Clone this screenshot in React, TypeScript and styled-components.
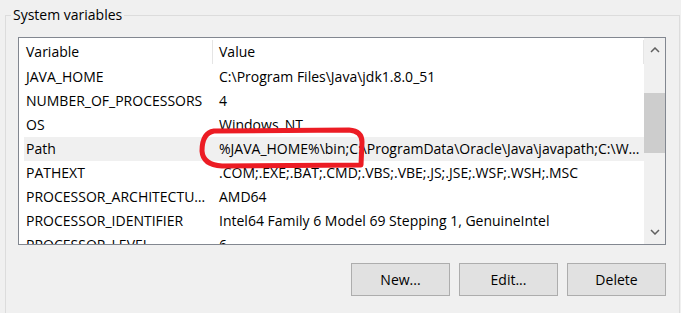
import React from "react";
import styled, { createGlobalStyle } from "styled-components";

const GlobalStyle = createGlobalStyle`
  html, body {
    margin: 0;
    padding: 0;
    background: #f0f0f0;
  }

  body {
    font-family: "Open Sans", "Noto Sans", sans-serif;
    font-size: 14px;
    color: #000;
  }
`;

const Page = styled.div`
  position: relative;
  width: 681px;
  height: 313px;
  overflow: hidden;
`;

const GroupBox = styled.fieldset`
  box-sizing: border-box;
  width: 675px;
  min-width: 0;
  min-height: 340px;
  margin: 5px 0 0 5px;
  padding: 0;
  border: 1px solid #dcdcdc;
`;

const Legend = styled.legend`
  margin-left: 5px;
  padding: 0 2px;
  line-height: 20px;
`;

const GroupBody = styled.div`
  padding: 12px 13px 0 12px;
`;

const ListView = styled.div`
  box-sizing: border-box;
  display: flex;
  width: 648px;
  height: 208px;
  border: 1px solid #828790;
  background: #fff;
  overflow: hidden;
`;

const Viewport = styled.div`
  flex: 1;
  padding-left: 5px;
  overflow: hidden;
`;

const Header = styled.div`
  display: grid;
  grid-template-columns: 189px 1fr;
  height: 27px;
`;

interface CellProps {
  $first?: boolean;
}

const HeaderCell = styled.div<CellProps>`
  box-sizing: border-box;
  height: 24px;
  margin-top: 2px;
  padding-left: ${(p) => (p.$first ? "2px" : "6px")};
  border-right: 1px solid #e5e5e5;
  line-height: 24px;
  white-space: nowrap;
`;

interface RowProps {
  $selected?: boolean;
}

const Row = styled.div<RowProps>`
  display: grid;
  grid-template-columns: 189px 1fr;
  height: 24px;
  line-height: 24px;
  background: ${(p) => (p.$selected ? "#f0f0f0" : "transparent")};
`;

const Cell = styled.div<CellProps>`
  min-width: 0;
  padding-left: ${(p) => (p.$first ? "2px" : "6px")};
  padding-right: 4px;
  white-space: nowrap;
  overflow: hidden;
  text-overflow: ellipsis;
`;

const ScrollBar = styled.div`
  display: flex;
  flex-direction: column;
  width: 21px;
  background: #f0f0f0;
`;

const ArrowButton = styled.div`
  display: flex;
  align-items: center;
  justify-content: center;
  height: 24px;
`;

const Track = styled.div`
  flex: 1;
`;

const Thumb = styled.div`
  margin-top: 31px;
  height: 60px;
  background: #cdcdcd;
`;

const ButtonRow = styled.div`
  display: flex;
  justify-content: flex-end;
  gap: 9px;
  width: 648px;
  margin-top: 18px;
`;

const Button = styled.button`
  box-sizing: border-box;
  width: 99px;
  height: 33px;
  padding: 0;
  border: 1px solid #adadad;
  background: #e1e1e1;
  color: #000;
  font-family: inherit;
  font-size: 14px;
`;

const Marker = styled.svg`
  position: absolute;
  top: 0;
  left: 0;
  pointer-events: none;
`;

const variables = [
  { name: "JAVA_HOME", value: "C:\\Program Files\\Java\\jdk1.8.0_51" },
  { name: "NUMBER_OF_PROCESSORS", value: "4" },
  { name: "OS", value: "Windows_NT" },
  {
    name: "Path",
    value:
      "%JAVA_HOME%\\bin;C:\\ProgramData\\Oracle\\Java\\javapath;C:\\Windows\\system32;C:\\Windows",
    selected: true,
  },
  { name: "PATHEXT", value: ".COM;.EXE;.BAT;.CMD;.VBS;.VBE;.JS;.JSE;.WSF;.WSH;.MSC" },
  { name: "PROCESSOR_ARCHITECTURE", value: "AMD64" },
  { name: "PROCESSOR_IDENTIFIER", value: "Intel64 Family 6 Model 69 Stepping 1, GenuineIntel" },
  { name: "PROCESSOR_LEVEL", value: "6" },
];

const Chevron = ({ down }: { down?: boolean }): JSX.Element => (
  <svg width="10" height="6" viewBox="0 0 10 6">
    <polyline
      points={down ? "1,1 5,5 9,1" : "1,5 5,1 9,5"}
      fill="none"
      stroke="#606060"
      strokeWidth="1.5"
    />
  </svg>
);

const App = (): JSX.Element => {
  return (
    <Page>
      <GlobalStyle />
      <GroupBox>
        <Legend>System variables</Legend>
        <GroupBody>
          <ListView>
            <Viewport>
              <Header>
                <HeaderCell $first>Variable</HeaderCell>
                <HeaderCell>Value</HeaderCell>
              </Header>
              {variables.map((v) => (
                <Row key={v.name} $selected={v.selected}>
                  <Cell $first>{v.name}</Cell>
                  <Cell>{v.value}</Cell>
                </Row>
              ))}
            </Viewport>
            <ScrollBar>
              <ArrowButton>
                <Chevron />
              </ArrowButton>
              <Track>
                <Thumb />
              </Track>
              <ArrowButton>
                <Chevron down />
              </ArrowButton>
            </ScrollBar>
          </ListView>
          <ButtonRow>
            <Button>New...</Button>
            <Button>Edit...</Button>
            <Button>Delete</Button>
          </ButtonRow>
        </GroupBody>
      </GroupBox>
      {/* hand-drawn highlight around the first Path entry */}
      <Marker width="681" height="313" viewBox="0 0 681 313">
        <path
          d="M 214 131 L 349 130 Q 362 131 362 142 L 361 165 L 222 166 Q 203 165 202 151 Q 202 133 214 131 Z"
          fill="none"
          stroke="#ec1c24"
          strokeWidth="5"
          strokeLinejoin="round"
        />
      </Marker>
    </Page>
  );
};

export default App;
